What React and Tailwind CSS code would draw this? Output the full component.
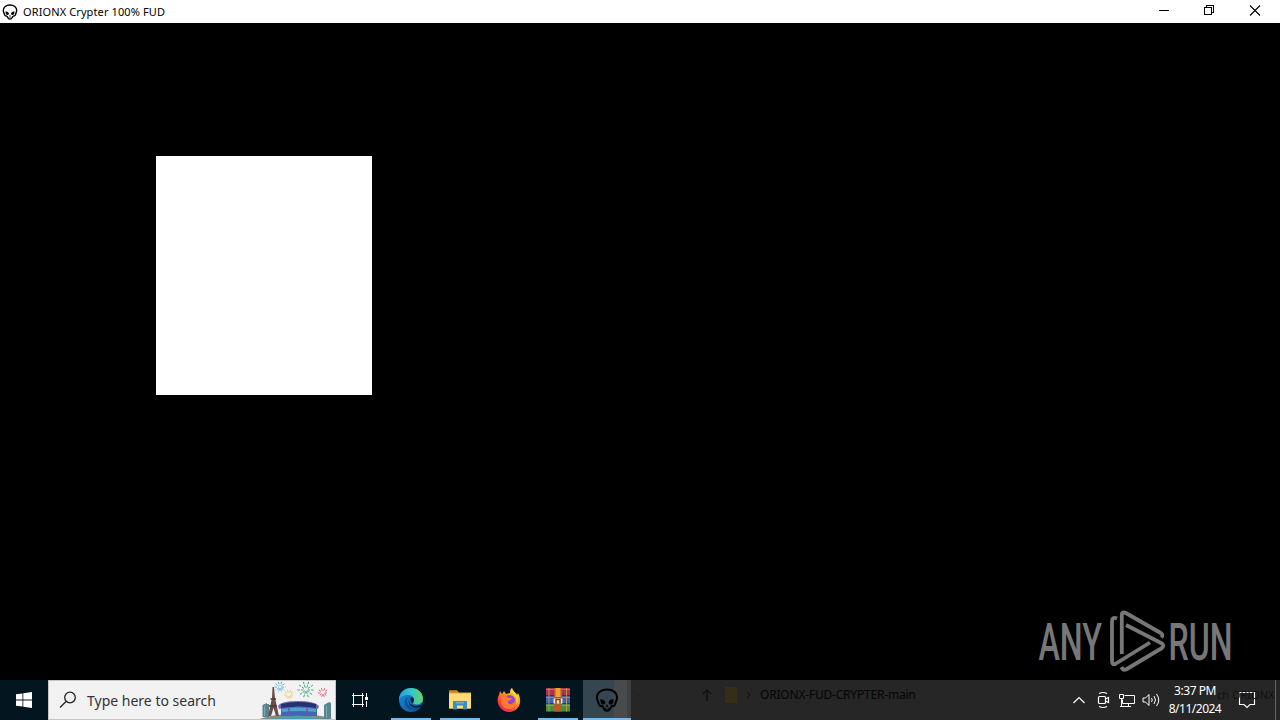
const Skull = ({ className }) => (
  <svg viewBox="0 0 24 24" className={className}>
    <path
      d="M12 1.500C6 1.500 2 4.800 2 9.500c0 2.500.9 3.800 1.400 5.200.4 1.300.3 2.200 1.400 2.800 1.100.5 2.500.4 3.200 1.400.7 1.100 1 3.800 4 3.800s3.300-2.700 4-3.800c.7-1 2.100-.9 3.200-1.400 1.100-.6 1-1.500 1.400-2.800.5-1.400 1.400-2.700 1.400-5.200C22 4.800 18 1.500 12 1.500z"
      fill="none"
      stroke="currentColor"
      strokeWidth="2.100"
    />
    <path d="M5.300 11.200c2.200-.2 4.300.8 5 2.700.3 1.700-.9 2.900-2.300 2.700-1.900-.2-2.800-2.600-2.700-5.400zM18.700 11.200c-2.200-.2-4.300.8-5 2.700-.3 1.700.9 2.900 2.300 2.700 1.900-.2 2.800-2.600 2.700-5.400zM12 16l1.400 2.800h-2.800z" fill="currentColor" />
    <path d="M10.500 19.800v2M12 19.800v2M13.500 19.800v2" stroke="currentColor" strokeWidth=".7" />
  </svg>
);

const TitleBar = () => (
  <header className="flex h-[23px] items-center bg-white text-black">
    <Skull className="ml-0.5 size-4" />
    <span className="ml-[5px] text-[11px] leading-none tracking-[0.11px] whitespace-nowrap">ORIONX Crypter 100% FUD</span>
    <div className="ml-auto flex h-full items-center">
      <svg className="h-[23px] w-[46px]" viewBox="0 0 46 23" fill="none" stroke="black" shapeRendering="crispEdges">
        <path d="M17 10.500h10" />
      </svg>
      <svg className="h-[23px] w-[46px]" viewBox="0 0 46 23" fill="none" stroke="black" shapeRendering="crispEdges">
        <path d="M16.500 7.500h7v7h-7zM18.500 7.500v-2h7v7h-2" />
      </svg>
      <svg className="h-[23px] w-[46px]" viewBox="0 0 46 23" fill="none" stroke="black" strokeWidth="1.100">
        <path d="M16 5.500l10 10M26 5.500l-10 10" />
      </svg>
    </div>
  </header>
);

const Watermark = () => (
  <svg
    className="absolute top-[600px] left-[1030px] h-[80px] w-[220px]"
    viewBox="1030 600 220 80"
    fill="#777"
    fontFamily="Roboto, sans-serif"
    fontSize="52.500"
    fontWeight="500"
  >
    <text x="1038.500" y="659.500" textLength="63.500" lengthAdjust="spacingAndGlyphs">ANY</text>
    <text x="1168.500" y="659.500" textLength="64" lengthAdjust="spacingAndGlyphs">RUN</text>
    <g fill="none" stroke="#777" strokeWidth="3.800" strokeLinejoin="round" strokeLinecap="butt">
      <path d="M1117 618.500q-5-2-5 3v40q0 4 4 2L1150 642.500" />
      <path d="M1121.800 654v-39q0-4 4-2l35 20q3 2 .5 4.500" />
      <path d="M1126 625l35 18q4 2 1 5l-36 21.500q-3 1-4.500-2.500" />
    </g>
  </svg>
);

const FIREWORKS = [
  { x: 280, y: 687, r: 5.5, color: '#55a9df' },
  { x: 289, y: 695, r: 5, color: '#f1c56d' },
  { x: 306, y: 690, r: 8.5, color: '#31a27c' },
  { x: 323, y: 693, r: 5, color: '#e75a70' },
];

const SearchArt = () => (
  <svg className="h-[38px] w-[79px]" viewBox="256 681 79 38">
    {FIREWORKS.map(({ x, y, r, color }) => (
      <g key={x} transform={`translate(${x} ${y})`} stroke={color} strokeWidth=".9" strokeDasharray="2.500 1">
        {[0, 36, 72, 108, 144].map((angle) => (
          <path key={angle} d={`M${-r} 0H-1.500M1.500 0H${r}`} transform={`rotate(${angle})`} />
        ))}
      </g>
    ))}
    <path d="M257 720q14-6 39-6t39 6z" fill="#7d8f86" />
    <path d="M262.500 705l4.500-2v14h-4.500zM267 704h2v13h-2zM324 705l5-3 2 1v16h-7z" fill="#5b8490" />
    <path d="M264.500 706v10M326.500 706v12" stroke="#7aabb0" />
    <path d="M272.500 687h1.500l1 11 4 18h-3l-2.500-8-2.500 8h-3l4-18z" fill="#6b4d4c" />
    <path d="M270.500 699h5.500M269 706h8" stroke="#4d3839" strokeWidth="1.500" />
    <path d="M281 706h36v10h-36z" fill="#3f68ae" />
    <path d="M278 706q3-5 20-5t21 5l-1 3q-20-4-39 0z" fill="#7270a8" />
    <path d="M281 704q17-4 35 0v4q-17-3-35 0z" fill="#252f72" />
    <path d="M282 709q16-3 34 0v3q-17-2-34 0z" fill="#4ba3cf" />
    <path d="M289 708v7M307 708v7" stroke="#7654aa" strokeWidth="1.500" />
    <path d="M274 719q23-7 47 0" fill="#4f9aad" />
  </svg>
);

const Edge = () => (
  <svg viewBox="0 0 24 24" className="size-6">
    <defs>
      <linearGradient id="edgeTop" x1="0" x2="1">
        <stop offset="0" stopColor="#249fdd" />
        <stop offset=".55" stopColor="#36c7c6" />
        <stop offset="1" stopColor="#64d75d" />
      </linearGradient>
      <linearGradient id="edgeBottom" x1="0" y1="0" x2="1" y2="1">
        <stop offset="0" stopColor="#158de0" />
        <stop offset="1" stopColor="#104e9a" />
      </linearGradient>
    </defs>
    <circle cx="12" cy="12" r="12" fill="url(#edgeBottom)" />
    <path d="M0 12C0 5 5 0 12 0c7 0 12 5 12 10.500 0 4-3 6-6.500 6-3 0-4-1-3-2.500 2-4-1-7-5-7-5 0-8.500 2-9.500 5z" fill="url(#edgeTop)" />
    <path d="M11 9c-3 1-4 4-2 7s7 5 13 2c-1 2-3 4-6 5C9 22 5 18 6 13c.5-3 2.500-4 5-4z" fill="#0b5596" />
    <path d="M11 9c-3 3 0 9 6 9 3 0 5-1 6-2l-1 2.500c-1 .7-3 1.200-5 1-7-.5-9-7-6-10.500z" fill="#031820" />
    <path d="M12 9.500c3 0 3.500 2.500 2.300 4.500-1 2-1.500 1-2.300-1-.6-1.500-.7-2.500 0-3.500z" fill="#031820" />
  </svg>
);

const Explorer = () => (
  <svg viewBox="0 0 24 24" className="size-6">
    <path d="M1 2.500h8l2 2h12v16H1z" fill="#e5a52a" />
    <path d="M1 5.500h22v15H1z" fill="#ffdc78" />
    <path d="M2 2.500h7l1 2H1z" fill="#dd7b25" />
    <path d="M5 21.500v-8.500h14v8.500h-4v-4H9v4z" fill="#398fc4" />
    <path d="M8 14h8v1.500H8z" fill="#6fb3d4" />
  </svg>
);

const Firefox = () => (
  <svg viewBox="0 0 24 24" className="size-6">
    <defs>
      <linearGradient id="fox" x1=".9" y1="0" x2=".2" y2="1">
        <stop offset="0" stopColor="#fff04b" />
        <stop offset=".4" stopColor="#ff9a1f" />
        <stop offset=".75" stopColor="#ff4038" />
        <stop offset="1" stopColor="#ed167c" />
      </linearGradient>
    </defs>
    <path d="M3 3l2 3 2-3 2 3 4-1c0-2 0-4 2-5 1 4 4 4 5 7l1-2c5 9 1 19-9 19C3 24-2 14 2 7z" fill="url(#fox)" />
    <circle cx="12.500" cy="12.500" r="5.500" fill="#9046db" />
    <path d="M5 8c3-2 5 0 6 2h4c-1 3-4 2-4 4 0 3 5 3 7-1 1-2 0-4-1-5 6 5 2 13-5 13-8 0-9-8-7-13z" fill="#ff7a2a" />
    <path d="M14 4c6 4 6 9 5 13 4-5 1-10-1-12-1-2-3-3-3-5z" fill="#ffda39" />
  </svg>
);

const WinRar = () => (
  <svg viewBox="0 0 24 24" className="size-6">
    <path d="M0 0h24v7.500H0z" fill="#b02f4c" />
    <path d="M0 8h24v7.500H0z" fill="#3e5fc0" />
    <path d="M0 16h24v7.500H0z" fill="#3f9140" />
    <path d="M0 1.500h24M0 9.500h24M0 17.500h24" stroke="#c9afb4" strokeWidth=".8" opacity=".6" />
    <path d="M3 0v23.500M20.500 0v23.500" stroke="#b89545" />
    <path d="M8 0h8v23.500H8z" fill="#ad6028" />
    <path d="M9.500 0h5v9h-5z" fill="#efa233" />
    <path d="M7.500 10.500h9v5h-9z" fill="#f4e7be" />
    <path d="M10 15.500v-4h4v4" fill="none" stroke="#784125" strokeWidth="1.500" />
  </svg>
);

const APPS = [
  { name: 'edge', Icon: Edge, open: true },
  { name: 'explorer', Icon: Explorer, open: true },
  { name: 'firefox', Icon: Firefox, open: false },
  { name: 'winrar', Icon: WinRar, open: true },
];

const Tray = () => (
  <div className="flex h-full items-center text-white">
    <svg className="h-10 w-24" viewBox="1067 680 96 40" fill="none" stroke="currentColor" strokeWidth="1.200">
      <path d="M1073.500 703l5.500-5.500 5.500 5.500" />
      <rect x="1098.500" y="696.500" width="7" height="7" rx="1" />
      <path d="M1105.500 699l3-1.500v5l-3-1.500M1099 693.500q4-2 8 0M1099 706.500q4 2 8 0" />
      <path d="M1124.500 695.500h10v8h-12v-4M1119.500 694.500h4v4h-4zM1121.500 698.500v8M1120 706.500h11M1128.500 703.500v3" strokeWidth="1" />
      <path d="M1143 698h2.500l3.500-3.500v11l-3.500-3.500h-2.500zM1151.500 698q1.500 2 0 4M1154 696q3 4 0 8M1156.500 694q4.500 6 0 12" strokeWidth="1" />
    </svg>
    <div className="flex w-16 flex-col items-center text-[12px] leading-[18px] whitespace-nowrap">
      <span className="tracking-[-0.45px]">3:37 PM</span>
      <span className="tracking-[-0.5px]">8/11/2024</span>
    </div>
    <svg className="h-10 w-12" viewBox="1227 680 48 40" fill="none" stroke="currentColor" strokeWidth="1.100">
      <path d="M1239.500 692.500h15v12h-4.500l-3 3-3-3h-4.500z" />
    </svg>
    <div className="h-full w-[5px] border-l border-[#656565]" />
  </div>
);

const Taskbar = () => (
  <footer className="flex h-10 bg-[#03161f]">
    <div className="flex w-12 items-center justify-center">
      <svg viewBox="0 0 16 16" className="size-4 fill-white">
        <path d="M0 2.300l6.500-.9v6.200H0zM7.300 1.300L16 0v7.600H7.300zM0 8.400h6.500v6.200L0 13.700zM7.300 8.400H16V16l-8.700-1.300z" />
      </svg>
    </div>
    <div className="flex w-72 items-center border border-[#c5c5c5] bg-[#f2f2f2] text-[#333]">
      <svg viewBox="0 0 18 18" className="ml-[10px] size-[18px]" fill="none" stroke="#222" strokeWidth="1.300">
        <circle cx="11" cy="6.500" r="5.300" />
        <path d="M7 10.500L1 16.500" />
      </svg>
      <span className="ml-[10px] text-[14px] whitespace-nowrap">Type here to search</span>
      <div className="ml-auto">
        <SearchArt />
      </div>
    </div>
    <div className="flex w-12 items-center justify-center">
      <svg viewBox="0 0 18 18" className="size-[18px]" fill="none" stroke="white" shapeRendering="crispEdges">
        <path d="M2.500 2v2.500h9V2M2.500 16v-2.500h9V16M2.500 4v10M11.500 4v10M1 4.500h12M1 13.500h12M15.500 2v4M15.500 10v6" />
        <path d="M14 6h3v3h-3z" fill="white" stroke="none" />
      </svg>
    </div>
    <div className="ml-[3px] flex gap-px">
      {APPS.map(({ name, Icon, open }) => (
        <div key={name} className="flex w-12 flex-col items-center">
          <div className="flex h-[38px] items-center pt-[2px]">
            <Icon />
          </div>
          {open && <div className="h-0.5 w-10 bg-[#76b9ed]" />}
        </div>
      ))}
      <div className="flex w-12 flex-col border-r-4 border-[#404040] bg-linear-to-r from-[#344650] from-[70%] to-[#484b4d] to-[70%]">
        <div className="flex h-[38px] items-center pt-[2px] pl-3 text-black">
          <Skull className="size-6" />
        </div>
        <div className="-mr-1 h-0.5 bg-[#76b9ed]" />
      </div>
    </div>
    <div className="flex grow items-center bg-[#262626]">
      <div className="flex h-full grow items-start pt-[5px] text-[#050505]">
        <span className="ml-1 text-[11px] text-[#202020]">←</span>
        <svg viewBox="0 0 12 14" className="mt-[3px] ml-[55px] h-[14px] w-3" fill="none" stroke="#101010" strokeWidth="1.500">
          <path d="M6 13V2M2 6l4-4 4 4" />
        </svg>
        <div className="mt-[2px] ml-3 h-4 w-3 bg-[#352d16]" />
        <svg viewBox="0 0 6 10" className="mt-[5px] ml-2 h-[10px] w-1.5" fill="none" stroke="#0c0c0c">
          <path d="M2 2l3 3-3 3" />
        </svg>
        <span className="ml-[9px] text-[12px] leading-[20px] tracking-[-0.2px] whitespace-nowrap">ORIONX-FUD-CRYPTER-main</span>
      </div>
      <Tray />
    </div>
  </footer>
);

const App = () => (
  <div className="relative flex h-[720px] w-[1280px] flex-col overflow-hidden bg-black font-['Noto_Sans','Open_Sans',sans-serif]">
    <TitleBar />
    <main className="flex grow items-start pt-[133px] pl-[156px]">
      <div className="h-[239px] w-[216px] bg-white" />
    </main>
    <Taskbar />
    <Watermark />
    <span className="absolute top-[686px] left-[1217px] text-[11px] leading-[18px] whitespace-nowrap text-[#101010]">ch ORIONX</span>
  </div>
);

export default App;
